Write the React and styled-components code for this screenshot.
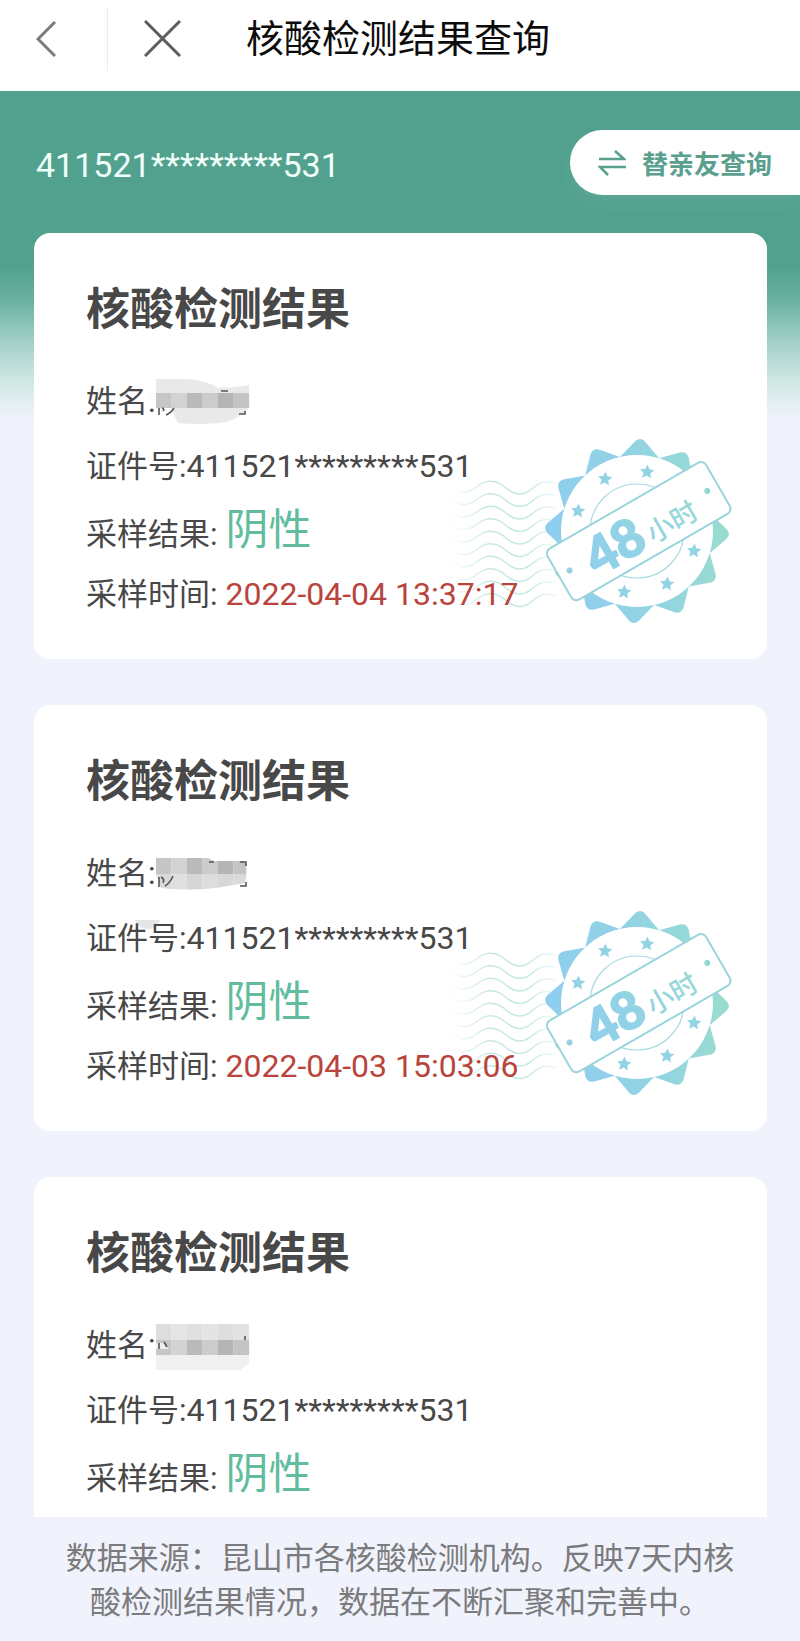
import React, { useId } from "react";
import styled, { createGlobalStyle } from "styled-components";

const GlobalStyle = createGlobalStyle`
  * { box-sizing: border-box; }
  body {
    margin: 0;
    background: #f0f3fc;
    font-family: Roboto, "Noto Sans CJK SC", sans-serif;
    color: #484848;
  }
  button { font: inherit; border: 0; margin: 0; padding: 0; cursor: pointer; }
  h1, h2, p, dl, dd { margin: 0; }
`;

const Page = styled.div`
  display: flex;
  flex-direction: column;
  height: 100vh;
`;

const Header = styled.header`
  display: flex;
  align-items: center;
  flex: none;
  height: 91px;
  padding-bottom: 14px;
  background: #fff;
`;

const NavButton = styled.button`
  display: flex;
  align-items: center;
  height: 64px;
  padding: 0 ${(p) => p.$right}px 0 36px;
  background: none;
  border-right: 1px solid ${(p) => (p.$divided ? "#ececec" : "transparent")};
  color: #5c5c5c;
`;

const PageTitle = styled.h1`
  font-size: 38px;
  font-weight: 400;
  line-height: 56px;
  color: #0c0c0c;
`;

const Content = styled.main`
  flex: 1;
  min-height: 0;
  overflow-y: auto;
  scrollbar-width: none;
  background: linear-gradient(
    #52a18f 0,
    #52a18f 176px,
    #6bb1a3 210px,
    #a3d0c8 252px,
    #d3e8e6 292px,
    #f0f3fc 328px
  );
`;

const AccountBar = styled.div`
  display: flex;
  align-items: center;
  justify-content: space-between;
  padding: 39px 0 38px 36px;
`;

const AccountId = styled.span`
  padding-top: 4px;
  font-size: 34px;
  line-height: 40px;
  color: #f1fffb;
`;

const SwitchButton = styled.button`
  && {
    display: flex;
    align-items: center;
    gap: 16px;
    height: 65px;
    padding: 0 28px;
    border-radius: 33px 0 0 33px;
    background: #fff;
    color: #5aa08f;
    font-size: 26px;
    font-weight: 700;
    box-shadow: 0 8px 16px rgba(255, 255, 255, 0.06);
  }
`;

const CardList = styled.div`
  display: flex;
  flex-direction: column;
  gap: 46px;
  padding: 0 33px 46px 34px;
`;

const Card = styled.article`
  position: relative;
  z-index: 0;
  flex: none;
  min-height: 426px;
  padding: 55px 52px 43px;
  border-radius: 16px;
  background: #fff;
`;

const CardTitle = styled.h2`
  margin-bottom: 48px;
  font-size: 44px;
  font-weight: 700;
  line-height: 44px;
`;

const Fields = styled.dl`
  display: flex;
  flex-direction: column;
  gap: 20px;
`;

const Field = styled.div`
  display: flex;
  align-items: ${(p) => (p.$top ? "flex-start" : "baseline")};
  gap: ${(p) => (p.$spaced ? 8 : 0)}px;
  height: 44px;
  font-size: 31px;
  line-height: 44px;
`;

const tones = {
  plain: { size: 32, color: "inherit" },
  result: { size: 43, color: "#62bd9e" },
  time: { size: 32, color: "#b8443c" },
};

const Value = styled.dd`
  font-size: ${(p) => tones[p.$tone].size}px;
  color: ${(p) => tones[p.$tone].color};
`;

const MaskedName = styled.svg`
  display: block;
  overflow: visible;
`;

const StampArt = styled.svg`
  position: absolute;
  z-index: -1;
  top: 203px;
  right: 33px;
`;

const Footer = styled.footer`
  flex: none;
  padding: 20px 60px 16px;
  background: #f0f3fc;
  font-size: 31px;
  line-height: 44px;
  text-align: center;
  color: #7b7b7d;
`;

const cells = ["#c6c6c6", "#d3d3d3", "#bababa", "#cccccc", "#b5b5b5", "#c4c4c4"];
const paleCells = ["#d9d9d9", "#e0e0e0", "#d6d6d6", "#dddddd", "#d8d8d8", "#dadada"];

function CellRow({ y, height = 15, colors = cells }) {
  return colors.map((c, i) => (
    <rect key={i} x={i * 15.5} y={y} width="15.6" height={height} fill={c} />
  ));
}

function Mosaic({ variant }) {
  const clip = useId();
  return (
    <MaskedName width="94" height="44" role="img" aria-label="已隐藏">
      {variant === 0 && (
        <>
          <path d="M-9 13 L0 11 V21 H-9Z" fill="#fdfdfd" />
          <path d="M0 -1 H32 Q52 1 62 8 Q76 8 93 5 V28 Q80 42 62 43 Q40 45 22 43 L15 28 H0Z" fill="#e9e9e9" />
          <CellRow y={13} />
          <path d="M3 28 V35 M6 28 Q9 29 7 31 M18 28 Q15 33 10 35 M65 11 H72 M83 34 H89 V31" fill="none" stroke="#555" strokeWidth="1.6" />
        </>
      )}
      {variant === 1 && (
        <>
          <clipPath id={clip}>
            <path d="M0 6 H52 L58 9 H89 Q92 20 89 31 L60 36 Q30 39 5 36 L0 22Z" />
          </clipPath>
          <g clipPath={`url(#${clip})`}>
            <CellRow y={6} height={16} />
            <CellRow y={22} height={18} colors={paleCells} />
          </g>
          <path d="M3 25 V35 M5 25 Q9 27 7 31 M17 24 Q14 31 9 34 M53 10 H58 M84 10 H90 V14 M84 34 H90 V30" fill="none" stroke="#555" strokeWidth="1.6" />
          <path d="M-21 68 H4 Q2 76 -7 77 Q-18 77 -21 68Z" fill="#dcdcdc" opacity="0.7" />
        </>
      )}
      {variant === 2 && (
        <>
          <path d="M-9 24 H0 V38 H-9Z" fill="#fdfdfd" />
          <path d="M0 31 H93 V40 L84 46 H0Z" fill="#f0f0f0" />
          <CellRow y={0} height={16} colors={["#dddddd", "#e5e5e5", "#e0e0e0", "#e4e4e4", "#dedede", "#e2e2e2"]} />
          <CellRow y={16} />
          <path d="M0 19 H9 L13 25 H0Z" fill="#eee" />
          <path d="M3 19 V25 M8 18 L11 23 M89 12 V16" fill="none" stroke="#555" strokeWidth="1.6" />
        </>
      )}
    </MaskedName>
  );
}

function polar(r, deg) {
  const a = (deg * Math.PI) / 180;
  return `${(r * Math.cos(a)).toFixed(1)} ${(r * Math.sin(a)).toFixed(1)}`;
}

const gear =
  Array.from({ length: 12 }, (_, i) => {
    const a = i * 30 + 2;
    return `${i ? "L" : "M"}${polar(76, a - 15)} L${polar(90, a - 3)} Q${polar(94, a)} ${polar(90, a + 3)}`;
  }).join(" ") + "Z";

const star =
  "M" + Array.from({ length: 10 }, (_, i) => polar(i % 2 ? 3.6 : 7.5, i * 36 - 85)).join(" L") + "Z";

const starSpots = [[-32, -52], [10, -59], [-59, -20], [57, 20], [30, 53], [-13, 61]];

function Stamp() {
  const id = useId();
  const tint = `url(#${id}t)`;
  return (
    <StampArt width="290" height="190" viewBox="0 0 290 190" role="img" aria-label="48小时">
      <defs>
        <linearGradient id={`${id}t`} gradientUnits="userSpaceOnUse" x1="-90" y1="10" x2="90" y2="-10">
          <stop offset="0" stopColor="#8ecdf0" />
          <stop offset="0.55" stopColor="#93d4e2" />
          <stop offset="1" stopColor="#98dccf" />
        </linearGradient>
        <linearGradient id={`${id}w`} gradientUnits="userSpaceOnUse" x1="4" y1="0" x2="112" y2="0">
          <stop offset="0" stopColor="#c6e8e3" stopOpacity="0" />
          <stop offset="0.4" stopColor="#c6e8e3" />
          <stop offset="0.75" stopColor="#c6e8e3" />
          <stop offset="1" stopColor="#c6e8e3" stopOpacity="0.2" />
        </linearGradient>
      </defs>
      <g fill="none" stroke={`url(#${id}w)`} strokeWidth="1.5">
        {Array.from({ length: 10 }, (_, i) => (
          <path
            key={i}
            d={`M4 ${50 + i * 12.5} c12 8 20 8 30 0 c11 -8 20 -5 28 2 c10 8 18 8 27 0 c8 -7 14 -7 23 -5`}
          />
        ))}
      </g>
      <g transform="translate(193 95)">
        <path d={gear} fill={tint} />
        <circle r="76" fill="#fff" />
        <circle r="47" fill="none" stroke="#a5dbdf" strokeWidth="1.2" />
        {starSpots.map(([x, y]) => (
          <path key={x} d={star} transform={`translate(${x} ${y})`} fill={tint} />
        ))}
        <g transform="translate(1 0) rotate(-30)">
          <rect x="-91" y="-29" width="183" height="59" rx="6" fill="#fff" stroke="#9ad5dc" strokeWidth="2" />
          <circle cx="-79" cy="0" r="3" fill="#93d0e4" />
          <circle cx="80" cy="0" r="3" fill="#93d6d6" />
          <text x="-28" y="20" textAnchor="middle" fontFamily="Lato, sans-serif" fontWeight="900" fontSize="52" fill={tint} stroke={tint} strokeWidth="1.5" strokeLinejoin="round">48</text>
          <text x="34" y="19" textAnchor="middle" fontFamily="'Noto Sans CJK SC', sans-serif" fontWeight="500" fontSize="27" fill={tint}>小时</text>
        </g>
      </g>
    </StampArt>
  );
}

const records = [
  { id: "411521*********531", result: "阴性", time: "2022-04-04 13:37:17" },
  { id: "411521*********531", result: "阴性", time: "2022-04-03 15:03:06" },
  { id: "411521*********531", result: "阴性" },
];

function ResultCard({ record, index }) {
  return (
    <Card>
      <CardTitle>核酸检测结果</CardTitle>
      <Fields>
        <Field $top>
          <dt>姓名:</dt>
          <dd><Mosaic variant={index} /></dd>
        </Field>
        <Field>
          <dt>证件号:</dt>
          <Value $tone="plain">{record.id}</Value>
        </Field>
        <Field $spaced>
          <dt>采样结果:</dt>
          <Value $tone="result">{record.result}</Value>
        </Field>
        {record.time && (
          <Field $spaced>
            <dt>采样时间:</dt>
            <Value $tone="time">{record.time}</Value>
          </Field>
        )}
      </Fields>
      {record.time && <Stamp />}
    </Card>
  );
}

export default function App() {
  return (
    <Page>
      <GlobalStyle />
      <Header>
        <NavButton $divided $right={51} aria-label="返回">
          <svg width="20" height="36" fill="none" stroke="#7a7a7a" strokeWidth="3">
            <path d="M19 1 L2 18 L19 35" />
          </svg>
        </NavButton>
        <NavButton $right={64} aria-label="关闭">
          <svg width="37" height="37" fill="none" stroke="currentColor" strokeWidth="3">
            <path d="M1 1 L36 36 M36 1 L1 36" />
          </svg>
        </NavButton>
        <PageTitle>核酸检测结果查询</PageTitle>
      </Header>
      <Content>
        <AccountBar>
          <AccountId>411521*********531</AccountId>
          <SwitchButton>
            <svg width="28" height="26" fill="none" stroke="currentColor" strokeWidth="2.6">
              <path d="M1 9 H26 L17 1 M28 17 H2 L10 25" />
            </svg>
            替亲友查询
          </SwitchButton>
        </AccountBar>
        <CardList>
          {records.map((r, i) => (
            <ResultCard key={i} record={r} index={i} />
          ))}
        </CardList>
      </Content>
      <Footer>
        <p>数据来源：昆山市各核酸检测机构。反映7天内核酸检测结果情况，数据在不断汇聚和完善中。</p>
      </Footer>
    </Page>
  );
}
